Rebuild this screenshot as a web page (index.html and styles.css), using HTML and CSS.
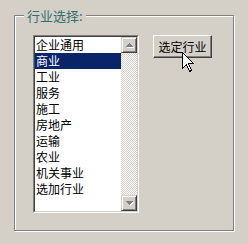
FILE: index.html
```html
<!DOCTYPE html>
<html lang="zh">
<head>
<meta charset="utf-8">
<title>行业选择</title>
<link rel="stylesheet" href="styles.css">
</head>
<body>
<fieldset class="group">
  <legend class="group-title">行业选择:</legend>
  <div class="group-body">
    <div class="listbox">
      <div class="listbox-inner">
        <ul class="items">
          <li>企业通用</li>
          <li class="selected">商业</li>
          <li>工业</li>
          <li>服务</li>
          <li>施工</li>
          <li>房地产</li>
          <li>运输</li>
          <li>农业</li>
          <li>机关事业</li>
          <li>选加行业</li>
        </ul>
        <div class="scrollbar">
          <div class="sb-btn">
            <svg class="sb-arrow" width="8" height="5" viewBox="0 0 8 5" shape-rendering="crispEdges">
              <path fill="#fff" d="M4 1h1v1h-1z M3 2h3v1h-3z M2 3h5v1h-5z M1 4h7v1h-7z"/>
              <path fill="#808080" d="M3 0h1v1h-1z M2 1h3v1h-3z M1 2h5v1h-5z M0 3h7v1h-7z"/>
            </svg>
          </div>
          <div class="sb-track"></div>
          <div class="sb-btn">
            <svg class="sb-arrow" width="8" height="5" viewBox="0 0 8 5" shape-rendering="crispEdges">
              <path fill="#fff" d="M1 1h7v1h-7z M2 2h5v1h-5z M3 3h3v1h-3z M4 4h1v1h-1z"/>
              <path fill="#808080" d="M0 0h7v1h-7z M1 1h5v1h-5z M2 2h3v1h-3z M3 3h1v1h-1z"/>
            </svg>
          </div>
        </div>
      </div>
    </div>
    <button class="btn" type="button">选定行业</button>
  </div>
</fieldset>
<svg class="cursor" width="13" height="21" viewBox="0 0 13 21" shape-rendering="crispEdges">
  <path d="M0.5 0.5 L0.5 16.5 L4.5 12.5 L7.5 19.5 L9.5 18.5 L6.5 11.5 L11.5 11.5 Z" fill="#fff" stroke="#000" stroke-width="1" stroke-linejoin="miter"/>
</svg>
</body>
</html>
```

FILE: styles.css
```css
* {
  box-sizing: border-box;
}

html,
body {
  margin: 0;
  padding: 0;
}

body {
  position: relative;
  width: 248px;
  height: 244px;
  overflow: hidden;
  background: #d4d0c8;
  font-family: "Noto Sans CJK SC", "Noto Sans", sans-serif;
  font-size: 12px;
  color: #000;
}

.group {
  margin: 8px 0 0 14px;
  width: 220px;
  min-width: 0;
  padding: 0 0 17px 9px;
  border: 1px solid #808080;
  box-shadow: 1px 1px 0 #fff, inset 1px 1px 0 #fff;
}

.group-title {
  padding: 0 3px;
  font-size: 13px;
  line-height: 15px;
  color: #336e6e;
  background: #d4d0c8;
}

.group-body {
  display: flex;
  align-items: flex-start;
  gap: 14px;
  padding: 12px 0 0 9px;
}

.listbox {
  width: 106px;
  height: 178px;
  border: 1px solid;
  border-color: #808080 #fff #fff #808080;
}

.listbox-inner {
  display: flex;
  height: 100%;
  border: 1px solid;
  border-color: #404040 #d4d0c8 #d4d0c8 #404040;
  background: #fff;
}

.items {
  flex: 1;
  margin: 0;
  padding: 0;
  list-style: none;
}

.items li {
  height: 16px;
  line-height: 16px;
  padding-left: 1px;
  white-space: nowrap;
}

.items li.selected {
  background: #0a246a;
  color: #fff;
}

.scrollbar {
  display: flex;
  flex-direction: column;
  width: 16px;
}

.sb-btn {
  display: flex;
  align-items: center;
  justify-content: center;
  width: 16px;
  height: 16px;
  border: 1px solid;
  border-color: #d4d0c8 #404040 #404040 #d4d0c8;
  box-shadow: inset 1px 1px 0 #fff, inset -1px -1px 0 #808080;
  background: #d4d0c8;
}

.sb-arrow {
  display: block;
  margin-left: 1px;
}

.sb-track {
  flex: 1;
  background-image: conic-gradient(#fff 25%, #d4d0c8 0 50%, #fff 0 75%, #d4d0c8 0);
  background-size: 2px 2px;
}

.btn {
  width: 59px;
  height: 23px;
  padding: 0;
  border: 1px solid;
  border-color: #fff #404040 #404040 #fff;
  box-shadow: inset -1px -1px 0 #808080;
  background: #d4d0c8;
  font-family: "Noto Sans CJK SC", "Noto Sans", sans-serif;
  font-size: 12px;
  line-height: 21px;
  color: #000;
}

.cursor {
  position: absolute;
  left: 182px;
  top: 52px;
}
```
